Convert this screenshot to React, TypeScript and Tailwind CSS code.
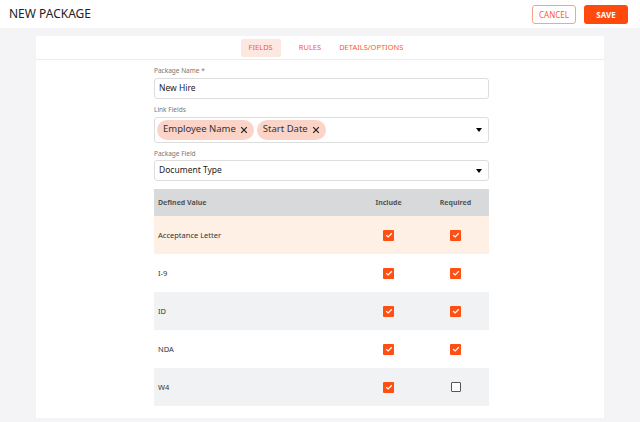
const rows = [
  { name: "Acceptance Letter", inc: true, req: true, bg: "bg-[#fff0e6]" },
  { name: "I-9", inc: true, req: true, bg: "bg-white" },
  { name: "ID", inc: true, req: true, bg: "bg-[#f1f2f3]" },
  { name: "NDA", inc: true, req: true, bg: "bg-white" },
  { name: "W4", inc: true, req: false, bg: "bg-[#f1f2f3]" },
];

function Box({ on }: { on: boolean }) {
  if (!on) return <div className="w-[10px] h-[10px] border border-[#555] rounded-[1px] bg-white" />;
  return (
    <div className="w-[11px] h-[11px] bg-[#ff4f12] rounded-[1px] flex items-center justify-center">
      <svg viewBox="0 0 10 10" className="w-[8px] h-[8px]">
        <path d="M1.5 5.2 L4 7.4 L8.5 2.8" stroke="white" strokeWidth="1.6" fill="none" />
      </svg>
    </div>
  );
}

function Caret() {
  return <div className="w-0 h-0 border-l-[3px] border-r-[3px] border-t-[4px] border-l-transparent border-r-transparent border-t-black" />;
}

function Chip({ label }: { label: string }) {
  return (
    <div className="flex items-center gap-1 h-[20px] px-[6px] rounded-full bg-[#fbd3c7] text-[9.5px] text-[#333]">
      {label}
      <svg viewBox="0 0 10 10" className="w-[8px] h-[8px]">
        <path d="M1.5 1.5 L8.5 8.5 M8.5 1.5 L1.5 8.5" stroke="#222" strokeWidth="1.5" />
      </svg>
    </div>
  );
}

export default function App() {
  return (
    <div className="w-[640px] h-[422px] bg-[#f4f4f6] font-['Liberation_Sans',sans-serif] overflow-hidden">
      <div className="h-[28px] bg-white flex items-center justify-between pl-[9px] pr-[12px]">
        <div className="text-[12px] text-[#222]">NEW PACKAGE</div>
        <div className="flex items-center gap-[8px] pt-[1px]">
          <div className="w-[44px] h-[19px] border border-[#f5a58c] rounded-[3px] text-[8px] text-[#ff5a1f] flex items-center justify-center">CANCEL</div>
          <div className="w-[44px] h-[19px] bg-[#ff4a0c] rounded-[3px] text-[8px] font-bold text-white flex items-center justify-center">SAVE</div>
        </div>
      </div>
      <div className="mx-[36px] mt-[8px] h-[382px] bg-white">
        <div className="h-[24px] border-b border-[#ececec] flex items-center justify-center gap-[18px] text-[7.5px] text-[#ff5a1f] pl-[4px]">
          <div className="px-[8px] h-[18px] bg-[#fde8e1] rounded-[2px] flex items-center">FIELDS</div>
          <div>RULES</div>
          <div>DETAILS/OPTIONS</div>
        </div>
        <div className="ml-[118px] w-[335px] pt-[6px]">
          <div className="text-[6.5px] text-[#777] mb-[2px]">Package Name *</div>
          <div className="h-[21px] border border-[#ddd] rounded-[3px] flex items-center px-[4px] text-[8.5px] text-[#222]">New Hire</div>
          <div className="text-[6.5px] text-[#777] mt-[6px] mb-[2px]">Link Fields</div>
          <div className="h-[26px] border border-[#ddd] rounded-[3px] flex items-center pl-[2px] pr-[6px] gap-[3px]">
            <Chip label="Employee Name" />
            <Chip label="Start Date" />
            <div className="flex-1" />
            <Caret />
          </div>
          <div className="text-[6.5px] text-[#777] mt-[6px] mb-[2px]">Package Field</div>
          <div className="h-[21px] border border-[#ddd] rounded-[3px] flex items-center px-[4px] pr-[6px] text-[8.5px] text-[#222] justify-between">
            Document Type
            <Caret />
          </div>
          <div className="mt-[8px]">
            <div className="h-[27px] bg-[#d8d9db] flex items-center text-[7px] font-bold text-[#555]">
              <div className="flex-1 pl-[4px]">Defined Value</div>
              <div className="w-[67px] text-center">Include</div>
              <div className="w-[67px] text-center">Required</div>
            </div>
            {rows.map((r) => (
              <div key={r.name} className={`h-[38px] flex items-center text-[7.5px] text-[#333] ${r.bg}`}>
                <div className="flex-1 pl-[4px]">{r.name}</div>
                <div className="w-[67px] flex justify-center"><Box on={r.inc} /></div>
                <div className="w-[67px] flex justify-center"><Box on={r.req} /></div>
              </div>
            ))}
          </div>
        </div>
      </div>
    </div>
  );
}
